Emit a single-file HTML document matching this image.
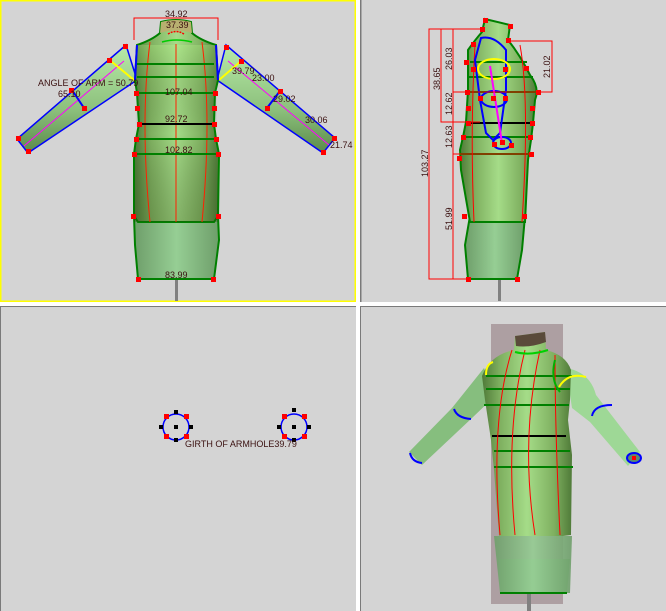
<!DOCTYPE html>
<html><head><meta charset="utf-8"><style>
html,body{margin:0;padding:0;background:#d4d4d4;}
svg{display:block;font-family:"Liberation Sans",sans-serif;}
</style></head><body>
<svg width="666" height="611" viewBox="0 0 666 611" xmlns="http://www.w3.org/2000/svg">
<defs>
<linearGradient id="body" x1="0" x2="1" y1="0" y2="0">
<stop offset="0" stop-color="#4f7a38"/><stop offset="0.2" stop-color="#7fb060"/><stop offset="0.5" stop-color="#a5dc88"/><stop offset="0.8" stop-color="#7fb060"/><stop offset="1" stop-color="#4f7a38"/></linearGradient>
<linearGradient id="shade" x1="0" x2="0" y1="0" y2="1"><stop offset="0" stop-color="#c0ff90" stop-opacity="0.25"/><stop offset="0.5" stop-color="#000" stop-opacity="0"/><stop offset="1" stop-color="#2a4010" stop-opacity="0.25"/></linearGradient>
<linearGradient id="skirt" x1="0" x2="1"><stop offset="0" stop-color="#6e9e6a"/><stop offset="0.5" stop-color="#96ce94"/><stop offset="1" stop-color="#6e9e6a"/></linearGradient>
<linearGradient id="arm" x1="0" x2="0" y1="0" y2="1"><stop offset="0" stop-color="#b8eaa8"/><stop offset="0.6" stop-color="#8cc07c"/><stop offset="1" stop-color="#5a8a4a"/></linearGradient>
</defs>
<rect width="666" height="611" fill="#d4d4d4"/>
<rect x="0" y="0" width="356" height="302" fill="none" stroke="#ffff00" stroke-width="3"/>
<rect x="356" y="0" width="4" height="611" fill="#fff"/>
<rect x="0" y="302" width="666" height="4" fill="#fff"/>
<rect x="360" y="0" width="1" height="302" fill="#7a7a7a"/>
<rect x="361" y="0" width="1" height="302" fill="#a8a8a8"/>
<rect x="360" y="306" width="306" height="1" fill="#7a7a7a"/>
<rect x="360" y="306" width="1" height="305" fill="#7a7a7a"/>
<rect x="0" y="306" width="356" height="1" fill="#7a7a7a"/>
<rect x="0" y="306" width="1" height="305" fill="#7a7a7a"/>

<!-- ===== FRONT VIEW ===== -->
<rect x="175" y="279" width="3" height="22" fill="#808080"/>
<polygon points="126,45 137,80 28,153 17,139" fill="url(#arm)" stroke="#0000ff" stroke-width="1.5"/>
<polygon points="226,45 217,80 323,153 335,138" fill="url(#arm)" stroke="#0000ff" stroke-width="1.5"/>
<line x1="124" y1="61" x2="24" y2="146" stroke="#ff00ff"/>
<line x1="228" y1="61" x2="329" y2="145" stroke="#ff00ff"/>
<line x1="112" y1="62" x2="134" y2="80" stroke="#ffff00" stroke-width="2"/>
<line x1="240" y1="62" x2="219" y2="80" stroke="#ffff00" stroke-width="2"/>
<line x1="72" y1="90" x2="84" y2="108" stroke="#0000ff" stroke-width="2"/>
<line x1="280" y1="91" x2="267" y2="108" stroke="#0000ff" stroke-width="2"/>
<path d="M134,216 L218,216 L219,240 L214,279 L138,279 L135,245 Z" fill="url(#skirt)" stroke="#008000" stroke-width="2"/>
<path d="M161,22 Q176,18 191,22 L192,33 Q200,40 216,45 L218,80 L215,93 L214,124 L216,139 L219,154 L218,216 L214,222 L138,222 L134,216 L134,154 L136,139 L139,124 L137,93 L135,80 L137,45 Q152,40 160,33 Z" fill="url(#body)" stroke="#008000" stroke-width="2"/>
<path d="M137,45 L216,45 L218,222 L134,222 Z" fill="url(#shade)"/>
<path d="M161,22 Q176,18 191,22 L192,33 Q176,28 160,33 Z" fill="#b8b070"/>
<line x1="137" y1="45" x2="135" y2="80" stroke="#0000ff" stroke-width="2"/>
<line x1="216" y1="45" x2="218" y2="80" stroke="#0000ff" stroke-width="2"/>
<path d="M150,42 Q140,120 150,222 M202,42 Q212,120 202,222 M176,44 L176,222" stroke="#ff2000" stroke-width="1" fill="none"/>
<path d="M162,42 Q176,38 192,42" stroke="#00cc00" stroke-width="1.5" fill="none"/>
<path d="M168,34 Q176,29 184,34" stroke="#ff0000" stroke-width="1.5" fill="none" stroke-dasharray="2,1"/>
<g stroke="#008000" stroke-width="2"><line x1="137" y1="64" x2="214" y2="64"/><line x1="137" y1="77" x2="214" y2="77"/><line x1="137" y1="93" x2="215" y2="93"/><line x1="136" y1="139" x2="216" y2="139"/><line x1="134" y1="154" x2="219" y2="154"/></g>
<line x1="139" y1="124" x2="213" y2="124" stroke="#000" stroke-width="2"/>
<path d="M134,40 L134,18 L218,18 L218,40" stroke="#ff0000" fill="none"/>
<g fill="#ff0000">
<rect x="123" y="44" width="5" height="5"/><rect x="107" y="58" width="5" height="5"/><rect x="69" y="88" width="5" height="5"/><rect x="82" y="106" width="5" height="5"/><rect x="16" y="136" width="5" height="5"/><rect x="26" y="149" width="5" height="5"/>
<rect x="134" y="91" width="5" height="5"/><rect x="135" y="106" width="5" height="5"/><rect x="137" y="122" width="5" height="5"/><rect x="134" y="137" width="5" height="5"/><rect x="132" y="152" width="5" height="5"/><rect x="131" y="214" width="5" height="5"/><rect x="136" y="277" width="5" height="5"/>
<rect x="211" y="277" width="5" height="5"/><rect x="216" y="214" width="5" height="5"/><rect x="216" y="152" width="5" height="5"/><rect x="214" y="137" width="5" height="5"/><rect x="212" y="122" width="5" height="5"/><rect x="212" y="106" width="5" height="5"/><rect x="213" y="91" width="5" height="5"/>
<rect x="224" y="45" width="5" height="5"/><rect x="239" y="59" width="5" height="5"/><rect x="278" y="89" width="5" height="5"/><rect x="265" y="106" width="5" height="5"/><rect x="332" y="136" width="5" height="5"/><rect x="321" y="150" width="5" height="5"/>
</g>
<g font-size="9" fill="#3a1010">
<text x="165" y="17">34.92</text><text x="166" y="28">37.39</text>
<text x="38" y="86">ANGLE OF ARM = 50.79</text><text x="58" y="97">65.10</text>
<text x="232" y="74">39.79</text><text x="252" y="81">23.00</text><text x="273" y="102">29.02</text><text x="305" y="123">30.06</text><text x="330" y="148">21.74</text>
<text x="165" y="95">107.04</text><text x="165" y="122">92.72</text><text x="165" y="153">102.82</text><text x="165" y="278">83.99</text>
</g>

<!-- ===== SIDE VIEW ===== -->
<rect x="498" y="279" width="3" height="22" fill="#808080"/>
<path d="M470,216 L525,216 L522,250 L517,279 L468,279 L465,245 Z" fill="url(#skirt)" stroke="#008000" stroke-width="2"/>
<path d="M485,19 L510,25 L508,40 Q520,55 530,75 Q540,88 535,100 L533,123 L531,140 L528,160 L525,222 L470,222 L461,170 L460,150 L463,137 L466,122 L468,90 L468,50 Q475,40 482,32 Z" fill="url(#body)" stroke="#008000" stroke-width="2"/>
<g stroke="#008000" stroke-width="2"><line x1="470" y1="62" x2="527" y2="62"/><line x1="468" y1="77" x2="533" y2="77"/><line x1="467" y1="92" x2="537" y2="92"/><line x1="463" y1="137" x2="530" y2="137"/><line x1="460" y1="154" x2="531" y2="154"/></g>
<line x1="467" y1="123" x2="532" y2="123" stroke="#000" stroke-width="2"/>
<path d="M475,45 Q470,130 474,222 M520,45 Q530,100 522,222" stroke="#ff0000" fill="none"/>
<g fill="none" stroke="#0000ff" stroke-width="2">
<path d="M481,38 Q494,35 506,50 L506,90 L500,133 L493,140 L486,133 L480,100 L475,60 Z"/>
<ellipse cx="494" cy="99" rx="13" ry="8"/><ellipse cx="502" cy="143" rx="9" ry="6"/>
</g>
<ellipse cx="494" cy="69" rx="16" ry="10" fill="none" stroke="#ffff00" stroke-width="2"/>
<line x1="490" y1="66" x2="502" y2="143" stroke="#ff00ff" stroke-width="2"/>
<g stroke="#ff0000" fill="none">
<path d="M485,29 L429,29 L429,279 L468,279"/><path d="M441,29 L441,122 L480,122"/><path d="M453,29 L453,279"/>
<path d="M510,41 L552,41 L552,92 L537,92"/><path d="M453,92 L537,92"/><path d="M453,154 L530,154"/>
</g>
<g fill="#ff0000">
<rect x="483" y="18" width="5" height="5"/><rect x="508" y="24" width="5" height="5"/><rect x="480" y="27" width="5" height="5"/><rect x="506" y="38" width="5" height="5"/><rect x="471" y="42" width="5" height="5"/><rect x="464" y="60" width="5" height="5"/><rect x="524" y="66" width="5" height="5"/><rect x="471" y="67" width="5" height="5"/><rect x="503" y="67" width="5" height="5"/>
<rect x="465" y="90" width="5" height="5"/><rect x="536" y="90" width="5" height="5"/><rect x="478" y="96" width="5" height="5"/><rect x="491" y="96" width="5" height="5"/><rect x="503" y="96" width="5" height="5"/><rect x="466" y="106" width="5" height="5"/><rect x="530" y="106" width="5" height="5"/><rect x="466" y="121" width="5" height="5"/><rect x="530" y="121" width="5" height="5"/>
<rect x="461" y="135" width="5" height="5"/><rect x="528" y="135" width="5" height="5"/><rect x="492" y="142" width="5" height="5"/><rect x="500" y="140" width="5" height="5"/><rect x="509" y="143" width="5" height="5"/><rect x="457" y="156" width="5" height="5"/><rect x="529" y="152" width="5" height="5"/>
<rect x="462" y="214" width="5" height="5"/><rect x="522" y="214" width="5" height="5"/><rect x="466" y="277" width="5" height="5"/><rect x="515" y="277" width="5" height="5"/>
</g>
<g font-size="9" fill="#3a1010">
<text transform="translate(428,177) rotate(-90)">103.27</text>
<text transform="translate(440,90) rotate(-90)">38.65</text>
<text transform="translate(452,70) rotate(-90)">26.03</text>
<text transform="translate(452,115) rotate(-90)">12.62</text>
<text transform="translate(452,148) rotate(-90)">12.63</text>
<text transform="translate(452,230) rotate(-90)">51.99</text>
<text transform="translate(550,78) rotate(-90)">21.02</text>
</g>

<!-- ===== BOTTOM LEFT ===== -->
<g>
<circle cx="176" cy="427" r="13" fill="none" stroke="#0000ff" stroke-width="1.5"/>
<circle cx="294" cy="427" r="13" fill="none" stroke="#0000ff" stroke-width="1.5"/>
<g fill="#ff0000"><rect x="164" y="414" width="5" height="5"/><rect x="184" y="414" width="5" height="5"/><rect x="164" y="434" width="5" height="5"/><rect x="184" y="434" width="5" height="5"/>
<rect x="282" y="414" width="5" height="5"/><rect x="302" y="414" width="5" height="5"/><rect x="282" y="434" width="5" height="5"/><rect x="302" y="434" width="5" height="5"/></g>
<g fill="#000"><rect x="174" y="410" width="4" height="4"/><rect x="174" y="438" width="4" height="4"/><rect x="159" y="425" width="4" height="4"/><rect x="189" y="425" width="4" height="4"/><rect x="174" y="425" width="4" height="4"/>
<rect x="292" y="408" width="4" height="4"/><rect x="292" y="438" width="4" height="4"/><rect x="277" y="425" width="4" height="4"/><rect x="307" y="425" width="4" height="4"/><rect x="292" y="425" width="4" height="4"/></g>
<text x="185" y="447" font-size="9" fill="#3a1010">GIRTH OF ARMHOLE39.79</text>
</g>

<!-- ===== 3D VIEW ===== -->
<rect x="491" y="324" width="72" height="280" fill="#ad9fa2"/>
<rect x="527" y="590" width="4" height="21" fill="#808080"/>
<path d="M484,368 L496,395 L472,418 L422,465 L409,452 L452,408 Z" fill="#86be7e"/>
<path d="M566,368 Q590,372 596,395 L640,452 L628,466 L590,422 L572,408 Z" fill="#9ed896"/>
<path d="M499,559 L570,559 L567,593 L500,593 Z" fill="#8cc48a"/>
<path d="M515,336 L545,332 L546,350 Q566,355 571,370 L570,400 L568,420 L572,455 L571,535 L563,536 L499,536 L494,470 L491,440 L485,400 L482,376 Q490,355 514,350 Z" fill="url(#body)"/>
<path d="M515,336 L545,332 L546,342 Q530,348 516,346 Z" fill="#5a4a3a"/>
<path d="M494,536 L572,536 L570,593 L500,593 Z" fill="url(#skirt)" opacity="0.9"/>
<g stroke="#008000" stroke-width="2"><line x1="486" y1="376" x2="572" y2="376"/><line x1="486" y1="389" x2="570" y2="389"/><line x1="484" y1="405" x2="569" y2="405"/><line x1="494" y1="451" x2="570" y2="451"/><line x1="494" y1="467" x2="573" y2="467"/><line x1="500" y1="593" x2="567" y2="593"/></g>
<line x1="492" y1="436" x2="566" y2="436" stroke="#000" stroke-width="2"/>
<path d="M512,350 Q490,420 500,535 M525,350 Q505,430 515,535 M540,350 Q520,440 535,535 M555,355 Q555,430 560,535" stroke="#ff0000" fill="none"/>
<path d="M515,352 Q530,356 548,350" stroke="#00d000" stroke-width="2" fill="none"/>
<path d="M486,375 Q486,364 493,362" stroke="#ffff00" stroke-width="2" fill="none"/>
<path d="M559,387 Q568,372 586,377" stroke="#ffff00" stroke-width="2" fill="none"/>
<path d="M555,360 Q550,380 560,392" stroke="#00b000" stroke-width="2" fill="none"/>
<path d="M454,409 Q457,418 471,419" stroke="#0000ff" stroke-width="2" fill="none"/>
<path d="M592,416 Q594,405 612,405" stroke="#0000ff" stroke-width="2" fill="none"/>
<path d="M410,453 Q412,462 422,463" stroke="#0000ff" stroke-width="2" fill="none"/>
<ellipse cx="634" cy="458" rx="7" ry="5" fill="#5a8a70" stroke="#0000ff" stroke-width="2"/>
<rect x="632" y="456" width="4" height="4" fill="#ff0000"/>
</svg>
</body></html>
